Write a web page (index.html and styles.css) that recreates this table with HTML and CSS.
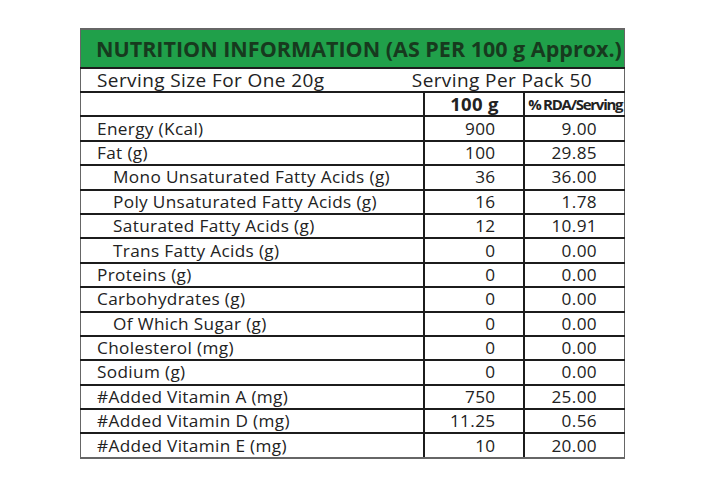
FILE: index.html
```html
<!DOCTYPE html>
<html>
<head>
<meta charset="utf-8">
<link rel="stylesheet" href="styles.css">
</head>
<body>
<div class="page">
  <table class="nutri">
    <colgroup>
      <col class="c-name">
      <col class="c-val">
      <col class="c-rda">
    </colgroup>
    <tr class="title-row">
      <td colspan="3" class="title">NUTRITION INFORMATION (AS PER 100 g Approx.)</td>
    </tr>
    <tr class="serving-row">
      <td colspan="3" class="serving">
        <div class="serving-inner">
          <span class="s-left">Serving Size For One 20g</span>
          <span class="s-right">Serving Per Pack 50</span>
        </div>
      </td>
    </tr>
    <tr class="head-row">
      <td></td>
      <td class="h-100">100 g</td>
      <td class="h-rda">% RDA/Serving</td>
    </tr>
    <tr><td class="name">Energy (Kcal)</td><td class="num">900</td><td class="num rda">9.00</td></tr>
    <tr><td class="name">Fat (g)</td><td class="num">100</td><td class="num rda">29.85</td></tr>
    <tr><td class="name sub">Mono Unsaturated Fatty Acids (g)</td><td class="num">36</td><td class="num rda">36.00</td></tr>
    <tr><td class="name sub">Poly Unsaturated Fatty Acids (g)</td><td class="num">16</td><td class="num rda">1.78</td></tr>
    <tr><td class="name sub">Saturated Fatty Acids (g)</td><td class="num">12</td><td class="num rda">10.91</td></tr>
    <tr><td class="name sub">Trans Fatty Acids (g)</td><td class="num">0</td><td class="num rda">0.00</td></tr>
    <tr><td class="name">Proteins (g)</td><td class="num">0</td><td class="num rda">0.00</td></tr>
    <tr><td class="name">Carbohydrates (g)</td><td class="num">0</td><td class="num rda">0.00</td></tr>
    <tr><td class="name sub">Of Which Sugar (g)</td><td class="num">0</td><td class="num rda">0.00</td></tr>
    <tr><td class="name">Cholesterol (mg)</td><td class="num">0</td><td class="num rda">0.00</td></tr>
    <tr><td class="name">Sodium (g)</td><td class="num">0</td><td class="num rda">0.00</td></tr>
    <tr><td class="name">#Added Vitamin A (mg)</td><td class="num">750</td><td class="num rda">25.00</td></tr>
    <tr><td class="name">#Added Vitamin D (mg)</td><td class="num">11.25</td><td class="num rda">0.56</td></tr>
    <tr><td class="name">#Added Vitamin E (mg)</td><td class="num">10</td><td class="num rda">20.00</td></tr>
  </table>
</div>
</body>
</html>
```
FILE: styles.css
```css
html, body {
  margin: 0;
  padding: 0;
  background: #ffffff;
}
.page {
  padding: 28px 0 0 80px;
}
.nutri {
  border-collapse: collapse;
  table-layout: fixed;
  width: 544px;
  font-family: "Open Sans", "Noto Sans", sans-serif;
  color: #222222;
  font-size: 17.2px;
  letter-spacing: 0.35px;
  border: 1.5px solid #666;
}
.c-name { width: 343px; }
.c-val { width: 100px; }
.c-rda { width: 101px; }
.nutri td {
  border: 2px solid #1c1c1c;
  padding: 0;
  height: 22.4px;
  line-height: 20px;
  white-space: nowrap;
  overflow: hidden;
}
.nutri tr:last-child td { border-bottom-color: #666; }
.nutri td:first-child { border-left-color: #666; border-left-width: 1.5px; }
.nutri td:last-child { border-right-color: #666; border-right-width: 1.5px; }
.title-row td.title {
  background: #20a04a;
  color: #173a1e;
  font-weight: 700;
  font-size: 21.5px;
  letter-spacing: 0px;
  height: 37px;
  padding-left: 15px;
  border-top-color: #666;
  border-bottom: 1px solid #20a04a;
}
.serving {
  padding: 0 32px 0 16px !important;
  font-size: 19px;
  letter-spacing: 0.4px;
}
.serving-inner {
  display: flex;
  justify-content: space-between;
}
.head-row td { height: 22px; }
.h-100 {
  font-weight: 700;
  font-size: 18.5px;
  text-align: center;
  padding-left: 2px !important;
}
.h-rda {
  font-weight: 700;
  font-size: 15px;
  letter-spacing: -1.25px;
  text-align: center;
  padding-left: 2px !important;
}
.name { padding-left: 16px !important; }
.name.sub { padding-left: 32px !important; }
.num {
  text-align: right;
  padding-right: 27px !important;
}
```
